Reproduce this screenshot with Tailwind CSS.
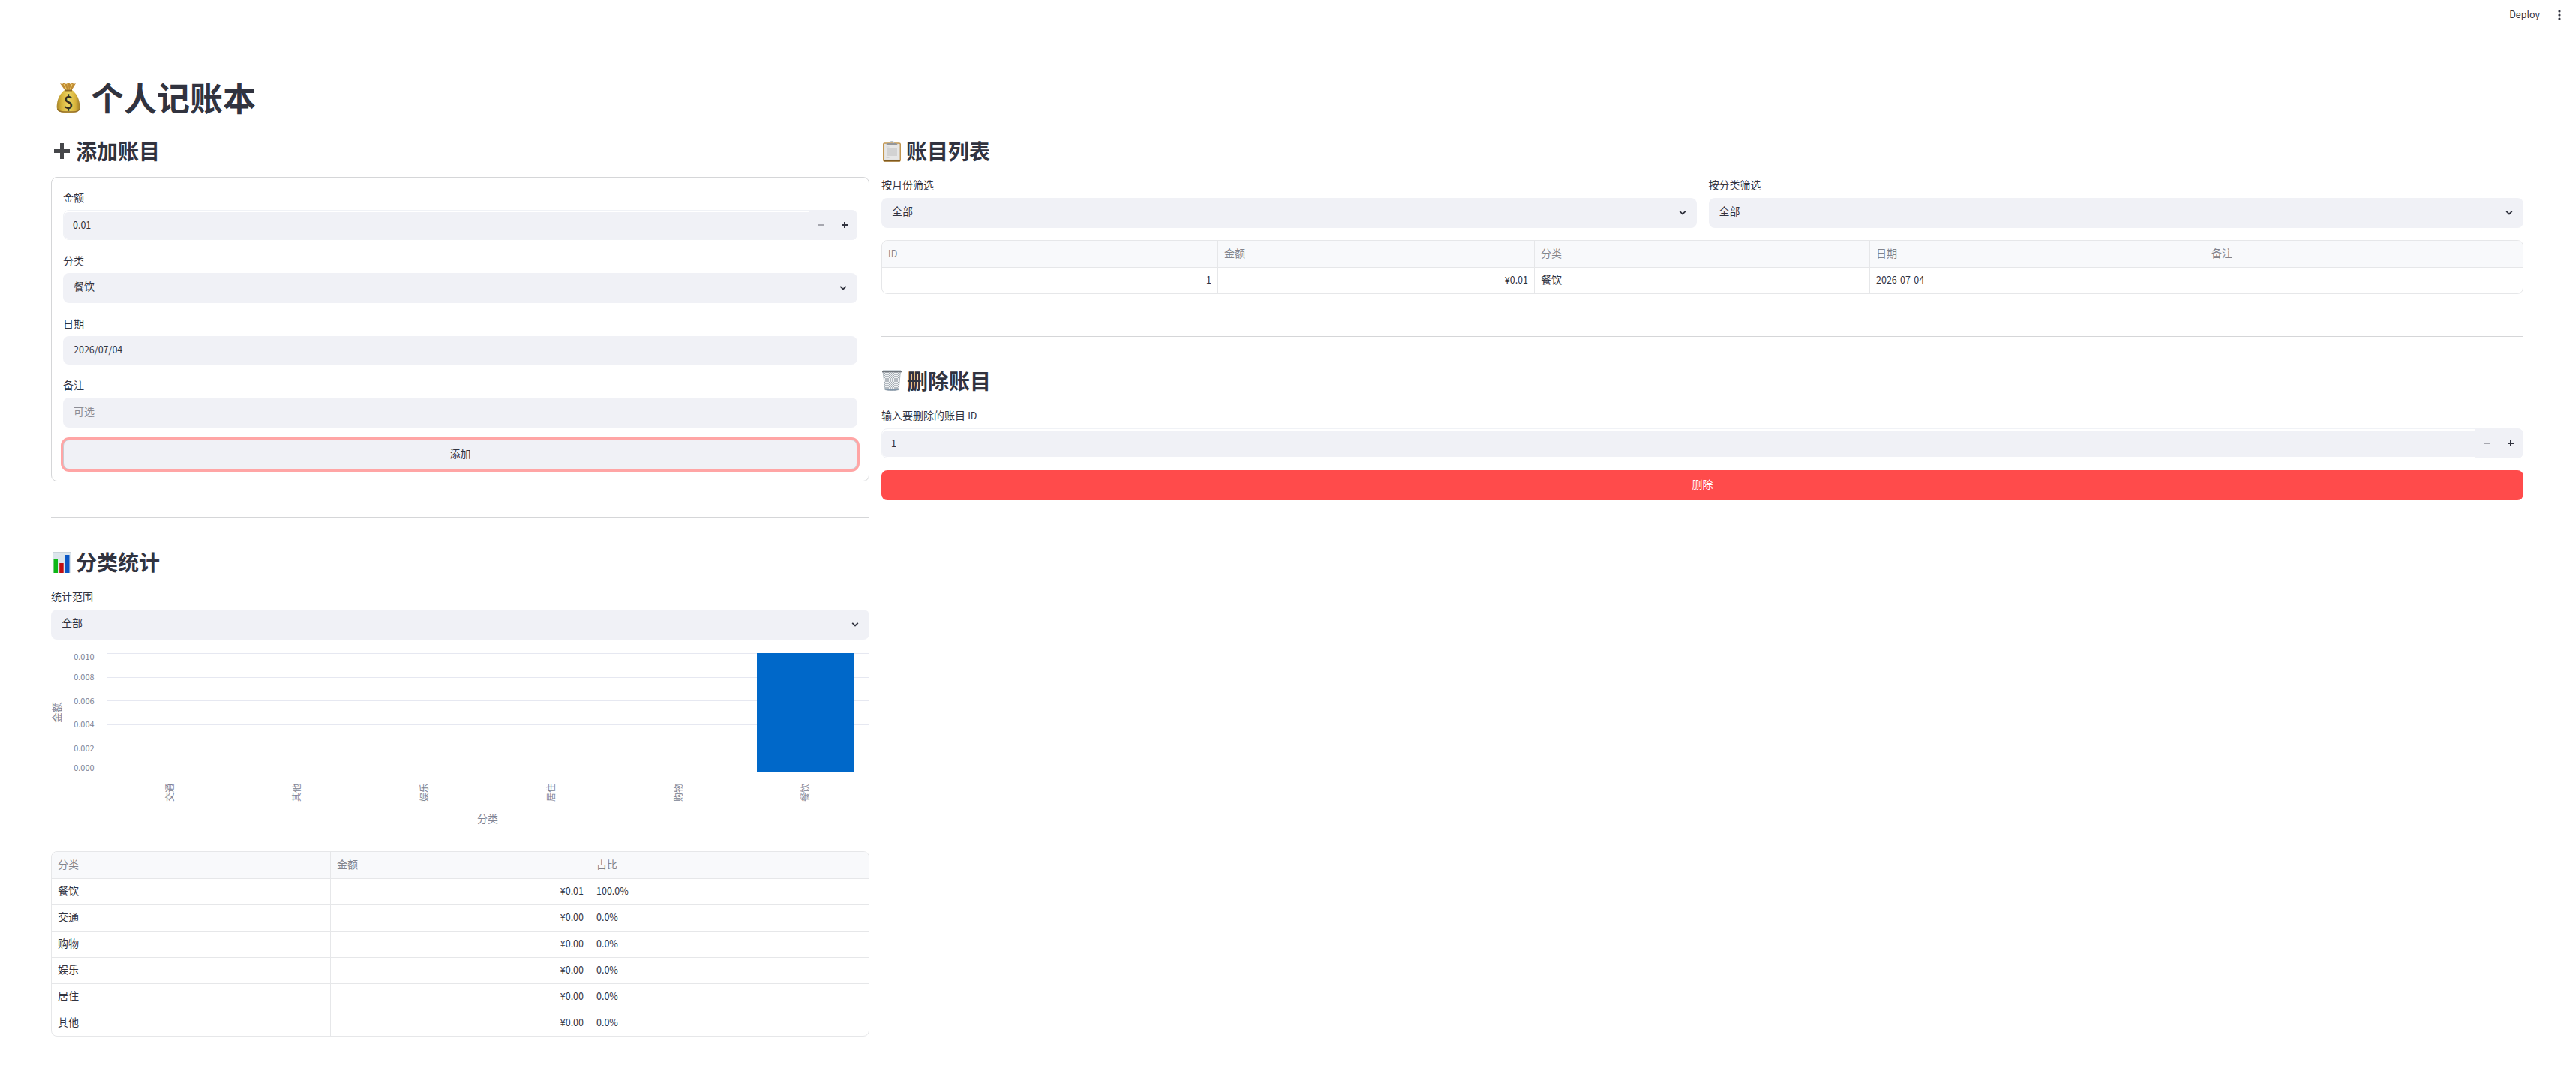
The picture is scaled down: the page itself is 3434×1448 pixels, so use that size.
<!doctype html>
<html lang="zh-CN">
  <head>
    <meta charset="UTF-8" />
    <meta name="viewport" content="width=device-width, initial-scale=1.0" />
    <title>个人记账本</title>
    <script src="https://cdn.jsdelivr.net/npm/@tailwindcss/browser@4"></script>
  </head>

  <body
    class="h-[1448px] overflow-hidden bg-white font-['Noto_Sans_CJK_SC','Noto_Sans',sans-serif] text-sm leading-5 text-[#31333f]"
  >
    <svg class="hidden">
      <symbol id="chevron" viewBox="0 0 10 8">
        <path d="M1.2 1.8 5 5.4 8.8 1.8" fill="none" stroke="currentColor" stroke-width="1.8" />
      </symbol>
      <symbol id="minus" viewBox="0 0 8 8">
        <path d="M0 3h8v2H0z" fill="currentColor" />
      </symbol>
      <symbol id="plus" viewBox="0 0 8 8">
        <path d="M3 0h2v3h3v2H5v3H3V5H0V3h3z" fill="currentColor" />
      </symbol>
    </svg>

    <!-- Toolbar -->
    <header class="flex h-[60px] items-start justify-end pr-[20px] pt-[9px]">
      <span class="mr-[24px] text-[12.5px]">Deploy</span>
      <svg class="mt-[4px] h-[14px] w-[4px]" viewBox="0 0 4 14" fill="currentColor">
        <circle cx="2" cy="2" r="1.6" />
        <circle cx="2" cy="7" r="1.6" />
        <circle cx="2" cy="12" r="1.6" />
      </svg>
    </header>

    <main class="pl-[68px] pr-[70px]">
      <h1 class="flex h-[112px] items-start pt-[41px] text-[44px] font-bold leading-[56px]">
        <svg class="ml-[7px] mr-[14px] mt-[8px] h-[42px] w-[32px]" viewBox="0 0 32 42">
          <defs>
            <linearGradient id="gold" x1="0" x2="1">
              <stop offset="0" stop-color="#a8862c" />
              <stop offset=".2" stop-color="#d6b33a" />
              <stop offset=".5" stop-color="#ecd462" />
              <stop offset=".8" stop-color="#d9b43c" />
              <stop offset="1" stop-color="#a07c28" />
            </linearGradient>
          </defs>
          <path d="M5 2l3 1 2-2 3 2 3-2 3 2 3-2 1 2 3-1-6 10H12z" fill="#c08c34" />
          <path d="M10 3l4 8M15 2l1 9M21 3l-3 8" stroke="#f0cd6c" stroke-width="1.2" />
          <path d="M11 11h10c5 4 9 10 10 18 1 6 0 10-4 11-6 1.500-16 1.500-22 0-4-1-5-5-4-11 1-8 5-14 10-18z" fill="url(#gold)" />
          <path d="M1.500 36c2 3 4 4 8 4h14c4 0 6-1 7.500-4" fill="none" stroke="#96702a" stroke-width="1.500" />
          <path d="M11 11.500h10" stroke="#8f6a24" stroke-width="2" />
          <text x="16" y="35.500" text-anchor="middle" font-size="23" font-weight="500" fill="#332e20">$</text>
        </svg>
        个人记账本
      </h1>

      <div class="flex gap-4">
        <!-- Left column -->
        <section class="w-[1091px] shrink-0">
          <h2 class="flex h-[64px] items-start pt-[9px] text-[28px] font-bold leading-[40px]">
            <svg class="ml-[4px] mr-[8px] mt-[10px] h-[21px] w-[21px]" viewBox="0 0 21 21">
              <path d="M8 0h5v8h8v5h-8v8H8v-8H0V8h8z" fill="#46474a" />
            </svg>
            添加账目
          </h2>

          <form class="h-[406px] rounded-lg border border-[#d5d6d8] px-[15px] pt-[16px]">
            <label class="block h-[27px]">金额</label>
            <div class="flex h-[40px] items-center rounded-lg border border-[#f0f2f6]">
              <div class="mt-px flex h-[35px] flex-1 items-center rounded-l-md bg-[#f0f1f6] pb-px pl-[12px] text-[12.5px]">0.01</div>
              <div class="-mr-px flex h-[40px] w-[65px] items-center gap-[24px] rounded-r-lg bg-[#f0f1f6] pl-[12px]">
                <svg class="size-2 text-[#a6a7af]"><use href="#minus" /></svg>
                <svg class="size-2"><use href="#plus" /></svg>
              </div>
            </div>

            <label class="mt-[17px] block h-[27px]">分类</label>
            <div class="flex h-[40px] items-center justify-between rounded-lg bg-[#f0f1f6] px-[14px] pb-[6px]">
              餐饮
              <svg class="mt-[6px] h-[8px] w-[10px]"><use href="#chevron" /></svg>
            </div>

            <label class="mt-[17px] block h-[27px]">日期</label>
            <div class="flex h-[38px] items-center rounded-lg bg-[#f0f1f6] pb-[2px] pl-[14px] text-[12.5px]">2026/07/04</div>

            <label class="mt-[17px] block h-[27px]">备注</label>
            <div class="flex h-[40px] items-center rounded-lg bg-[#f0f1f6] pb-[4px] pl-[14px] text-[#8c8d95]">可选</div>

            <button
              type="button"
              class="mt-[16px] block h-[40px] w-full rounded-lg border border-[#c9cbd1] bg-[#f0f1f6] pb-[4px] ring-3 ring-[#ffa5a5]"
            >
              添加
            </button>
          </form>

          <hr class="mt-[48px] border-[#d5d6d8]" />

          <h2 class="mt-[38px] flex h-[56px] items-start text-[28px] font-bold leading-[40px]">
            <svg class="ml-[2px] mr-[7px] mt-[7px] h-[28px] w-[24px]" viewBox="0 0 24 28">
              <path d="M0 0h24v28H0z" fill="#dce5ec" />
              <path d="M0 .5h24" stroke="#c9d3da" />
              <path d="M1.500 10h5.500v18H1.500z" fill="#0db716" />
              <path d="M9.200 15h5.500v13H9.200z" fill="#c00d10" />
              <path d="M17 4h5.500v24H17z" fill="#0b57c4" />
            </svg>
            分类统计
          </h2>
          <label class="block h-[28px]">统计范围</label>
          <div class="flex h-[40px] items-center justify-between rounded-lg bg-[#f0f1f6] px-[14px] pb-[6px]">
            全部
            <svg class="mt-[6px] h-[8px] w-[10px]"><use href="#chevron" /></svg>
          </div>

          <!-- Bar chart -->
          <svg class="mt-[15px] block h-[267px] w-[1091px] overflow-visible" viewBox="0 0 1091 267" fill="#808495">
            <g stroke="#e6e8f1" shape-rendering="crispEdges">
              <path d="M73.500 3.500H1091M73.500 35.500H1091M73.500 66.500H1091M73.500 98.500H1091M73.500 129.500H1091M73.500 161.500H1091" />
            </g>
            <path d="M941 3h129.700v158H941z" fill="#0068c9" />
            <g font-size="10.900" text-anchor="end">
              <text x="57.500" y="12">0.010</text>
              <text x="57.500" y="39">0.008</text>
              <text x="57.500" y="71">0.006</text>
              <text x="57.500" y="102">0.004</text>
              <text x="57.500" y="134">0.002</text>
              <text x="57.500" y="160">0.000</text>
            </g>
            <g font-size="12" text-anchor="end">
              <text transform="translate(162.500 177) rotate(-90)">交通</text>
              <text transform="translate(332 177) rotate(-90)">其他</text>
              <text transform="translate(501.500 177) rotate(-90)">娱乐</text>
              <text transform="translate(671 177) rotate(-90)">居住</text>
              <text transform="translate(840.500 177) rotate(-90)">购物</text>
              <text transform="translate(1010 177) rotate(-90)">餐饮</text>
            </g>
            <g font-size="14" text-anchor="middle">
              <text transform="translate(12.500 82) rotate(-90)">金额</text>
              <text x="582" y="229">分类</text>
            </g>
          </svg>

          <!-- Category totals -->
          <div class="h-[247px] overflow-hidden rounded-lg border border-[#e6e7e9] leading-[30px]">
            <div class="grid h-[36px] grid-cols-[372px_346px_1fr] divide-x divide-[#e6e7e9] border-b border-[#e6e7e9] bg-[#f8f9fb] leading-[32px] text-[#83848c] *:px-[8px]">
              <div>分类</div>
              <div>金额</div>
              <div>占比</div>
            </div>
            <div class="grid h-[35px] grid-cols-[372px_346px_1fr] divide-x divide-[#e6e7e9] border-b border-[#e6e7e9] *:px-[8px]">
              <div>餐饮</div>
              <div class="text-right text-[12.5px] leading-[32px]">¥0.01</div>
              <div class="text-[12.5px] leading-[32px]">100.0%</div>
            </div>
            <div class="grid h-[35px] grid-cols-[372px_346px_1fr] divide-x divide-[#e6e7e9] border-b border-[#e6e7e9] *:px-[8px]">
              <div>交通</div>
              <div class="text-right text-[12.5px] leading-[32px]">¥0.00</div>
              <div class="text-[12.5px] leading-[32px]">0.0%</div>
            </div>
            <div class="grid h-[35px] grid-cols-[372px_346px_1fr] divide-x divide-[#e6e7e9] border-b border-[#e6e7e9] *:px-[8px]">
              <div>购物</div>
              <div class="text-right text-[12.5px] leading-[32px]">¥0.00</div>
              <div class="text-[12.5px] leading-[32px]">0.0%</div>
            </div>
            <div class="grid h-[35px] grid-cols-[372px_346px_1fr] divide-x divide-[#e6e7e9] border-b border-[#e6e7e9] *:px-[8px]">
              <div>娱乐</div>
              <div class="text-right text-[12.5px] leading-[32px]">¥0.00</div>
              <div class="text-[12.5px] leading-[32px]">0.0%</div>
            </div>
            <div class="grid h-[35px] grid-cols-[372px_346px_1fr] divide-x divide-[#e6e7e9] border-b border-[#e6e7e9] *:px-[8px]">
              <div>居住</div>
              <div class="text-right text-[12.5px] leading-[32px]">¥0.00</div>
              <div class="text-[12.5px] leading-[32px]">0.0%</div>
            </div>
            <div class="grid h-[35px] grid-cols-[372px_346px_1fr] divide-x divide-[#e6e7e9] *:px-[8px]">
              <div>其他</div>
              <div class="text-right text-[12.5px] leading-[32px]">¥0.00</div>
              <div class="text-[12.5px] leading-[32px]">0.0%</div>
            </div>
          </div>
        </section>

        <!-- Right column -->
        <section class="min-w-0 flex-1">
          <h2 class="flex h-[64px] items-start pt-[9px] text-[28px] font-bold leading-[40px]">
            <svg class="ml-[2px] mr-[7px] mt-[7px] h-[28px] w-[24px]" viewBox="0 0 24 28">
              <rect x=".7" y="3" width="22.600" height="24" rx="1.500" fill="#e3e3e3" stroke="#c2964f" stroke-width="1.500" />
              <path d="M1 26.500h22" stroke="#7f5a1f" stroke-width="1.800" />
              <path d="M3 6h18v18H3z" fill="#e6e6e6" />
              <path d="M5 10h14v10H5z" fill="#d2d2d2" />
              <path d="M4.500 8h4M4.500 22.500h4" stroke="#d2d2d2" />
              <path d="M4 5.500 6 3h12l2 2.500z" fill="#949699" />
              <path d="M9.500 3a2.500 2.500 0 0 1 5 0" fill="none" stroke="#b9c3cf" stroke-width="1.300" />
            </svg>
            账目列表
          </h2>

          <div class="grid grid-cols-2 gap-4">
            <div>
              <label class="block h-[28px]">按月份筛选</label>
              <div class="flex h-[40px] items-center justify-between rounded-lg bg-[#f0f1f6] px-[14px] pb-[6px]">
                全部
                <svg class="mt-[6px] h-[8px] w-[10px]"><use href="#chevron" /></svg>
              </div>
            </div>
            <div>
              <label class="block h-[28px]">按分类筛选</label>
              <div class="flex h-[40px] items-center justify-between rounded-lg bg-[#f0f1f6] px-[14px] pb-[6px]">
                全部
                <svg class="mt-[6px] h-[8px] w-[10px]"><use href="#chevron" /></svg>
              </div>
            </div>
          </div>

          <!-- Records -->
          <div class="mt-[16px] h-[72px] overflow-hidden rounded-lg border border-[#e6e7e9] leading-[30px]">
            <div class="grid h-[36px] grid-cols-[448px_422px_447px_447px_1fr] divide-x divide-[#e6e7e9] border-b border-[#e6e7e9] bg-[#f8f9fb] leading-[32px] text-[#83848c] *:px-[8px]">
              <div class="text-[12.5px] leading-[34px]">ID</div>
              <div>金额</div>
              <div>分类</div>
              <div>日期</div>
              <div>备注</div>
            </div>
            <div class="grid h-[35px] grid-cols-[448px_422px_447px_447px_1fr] divide-x divide-[#e6e7e9] *:px-[8px]">
              <div class="text-right text-[12.5px] leading-[32px]">1</div>
              <div class="text-right text-[12.5px] leading-[32px]">¥0.01</div>
              <div>餐饮</div>
              <div class="text-[12.5px] leading-[32px]">2026-07-04</div>
              <div></div>
            </div>
          </div>

          <hr class="mt-[56px] border-[#d5d6d8]" />

          <h2 class="mt-[38px] flex h-[56px] items-start text-[28px] font-bold leading-[40px]">
            <svg class="mr-[6px] mt-[6px] h-[28px] w-[28px]" viewBox="0 0 28 28">
              <defs>
                <pattern id="mesh" width="3" height="3" patternUnits="userSpaceOnUse">
                  <path d="M0 0l3 3M3 0 0 3" stroke="#8d969e" stroke-width=".6" />
                </pattern>
              </defs>
              <path d="M2 2h23.500L23 26.500c-4 1.300-14 1.300-18 0z" fill="#eef1f3" />
              <path d="M2 2h23.500L23 26.500c-4 1.300-14 1.300-18 0z" fill="url(#mesh)" stroke="#a3adb5" stroke-width=".8" />
              <path d="M4.500 25.500c5 1.300 13 1.300 18.500 0" fill="none" stroke="#8195a8" stroke-width="1.800" />
              <path d="M1 1.500h26v1.800H1z" fill="#70767c" />
              <path d="M2 .8h24" stroke="#bdc6cd" />
            </svg>
            删除账目
          </h2>
          <label class="block h-[28px]">输入要删除的账目 <span class="text-[12.5px]">ID</span></label>
          <div class="flex h-[40px] items-center rounded-lg border border-[#f0f2f6]">
            <div class="flex h-[35px] flex-1 items-center rounded-l-md bg-[#f0f1f6] pb-px pl-[12px] text-[12.5px]">1</div>
            <div class="-mr-px flex h-[40px] w-[65px] items-center gap-[24px] rounded-r-lg bg-[#f0f1f6] pl-[12px]">
              <svg class="size-2 text-[#a6a7af]"><use href="#minus" /></svg>
              <svg class="size-2"><use href="#plus" /></svg>
            </div>
          </div>
          <button type="button" class="mt-[16px] block h-[40px] w-full rounded-lg bg-[#ff4b4b] pb-[4px] text-white">删除</button>
        </section>
      </div>
    </main>
  </body>
</html>
